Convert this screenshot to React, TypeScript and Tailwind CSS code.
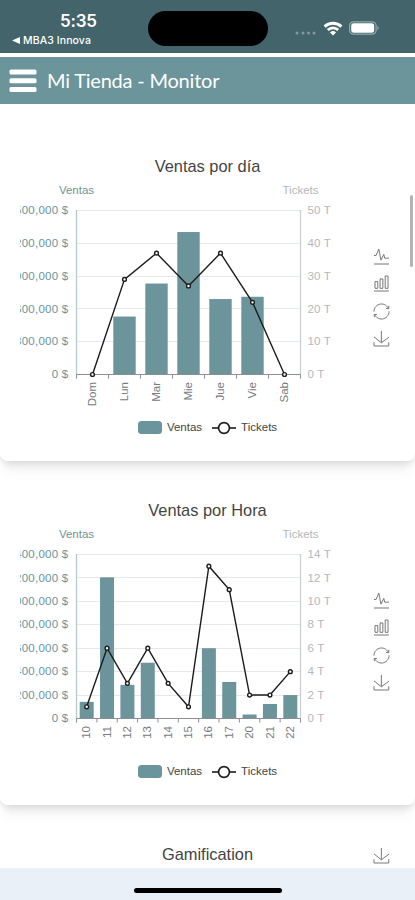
import type { ReactNode } from 'react';

const PLOT = { left: 76.5, right: 300.5, top: 74.5, bottom: 238.5 };

interface ChartData {
  title: string;
  categories: string[];
  ventas: number[];
  tickets: number[];
  maxVentas: number;
  maxTickets: number;
  steps: number;
  barWidth: number;
}

const VENTAS_DIA: ChartData = {
  title: 'Ventas por día',
  categories: ['Dom', 'Lun', 'Mar', 'Mie', 'Jue', 'Vie', 'Sab'],
  ventas: [0, 530000, 832000, 1303000, 690000, 711000, 0],
  tickets: [0, 29, 37, 27, 37, 22, 0],
  maxVentas: 1500000,
  maxTickets: 50,
  steps: 5,
  barWidth: 22.4,
};

const VENTAS_HORA: ChartData = {
  title: 'Ventas por Hora',
  categories: ['10', '11', '12', '13', '14', '15', '16', '17', '20', '21', '22'],
  ventas: [142000, 1205000, 287000, 476000, 0, 0, 600000, 312000, 34000, 124000, 200000],
  tickets: [1, 6, 3, 6, 3, 1, 13, 11, 2, 2, 4],
  maxVentas: 1400000,
  maxTickets: 14,
  steps: 7,
  barWidth: 14,
};

const TOOLS = {
  line: { box: '4.1 6.9 51.4 51.1', d: 'M4.1,28.9h7.1l9.3-22l7.4,38l9.7-19.7l3,12.8h14.9M4.1,58h51.4' },
  bar: { box: '3.1 2 53.7 56', d: 'M6.7,22.9h10V48h-10V22.9zM24.9,13h10v35h-10V13zM43.2,2h10v46h-10V2zM3.1,58h53.7' },
  restore: {
    box: '2.1 2 55.8 56',
    d: 'M47,18.9h9.8V8.7M56.3,20.1C52.1,9,40.5,0.6,26.8,2.1C12.6,3.7,1.6,16.2,2.1,30.6M13,41.1H3.1v10.2M3.7,39.9c4.2,11.1,15.8,19.5,29.5,18c14.2-1.6,25.2-14.1,24.7-28.5',
  },
  save: { box: '4.6 0 50.1 58', d: 'M4.7,22.9L29.3,45.5L54.7,23.4M4.6,43.6L4.6,58L53.8,58L53.8,43.6M29.2,45.1L29.2,0' },
};

function ToolIcon({ name }: { name: keyof typeof TOOLS }) {
  const tool = TOOLS[name];
  return (
    <svg className="h-[15px] w-[15px] overflow-visible" viewBox={tool.box} preserveAspectRatio="none">
      <path d={tool.d} fill="none" stroke="#777" strokeWidth="1" vectorEffect="non-scaling-stroke" />
    </svg>
  );
}

function Card({ title, className, children }: { title: string; className: string; children: ReactNode }) {
  return (
    <section className={`relative shrink-0 bg-white ${className}`}>
      <h2 className="flex h-[45px] items-center justify-center pt-[14px] text-[16.4px] leading-[30px] text-[#444]">
        {title}
      </h2>
      {children}
    </section>
  );
}

function ComboChart({ data }: { data: ChartData }) {
  const height = PLOT.bottom - PLOT.top;
  const band = (PLOT.right - PLOT.left) / data.categories.length;
  const cx = (i: number) => PLOT.left + band * (i + 0.5);
  const yTicket = (v: number) => PLOT.bottom - (v / data.maxTickets) * height;
  const ticks = Array.from({ length: data.steps + 1 }, (_, i) => i);

  // the left axis labels run past the canvas edge, so the svg clips them
  return (
    <svg width="325" height="230" viewBox="20 45 325 230" className="block overflow-hidden" fontSize="11.5">
      <text x="76.5" y="57.7" textAnchor="middle" fill="#6b949b">
        Ventas
      </text>
      <text x="300.5" y="57.7" textAnchor="middle" fill="#b4b8bb">
        Tickets
      </text>

      {ticks.map((i) => {
        const y = PLOT.bottom - (i / data.steps) * height;
        return (
          <g key={i}>
            {i > 0 && (
              <line x1={PLOT.left} x2={PLOT.right} y1={Math.floor(y) + 0.5} y2={Math.floor(y) + 0.5} stroke="#e3e8f1" />
            )}
            <text x="68.5" y={y + 3.7} textAnchor="end" fill="#6b949b" letterSpacing="0.25">
              {((data.maxVentas / data.steps) * i).toLocaleString('en-US')} $
            </text>
            <text x="307.5" y={y + 3.7} fill="#b4b8bb" letterSpacing="0.15">
              {(data.maxTickets / data.steps) * i} T
            </text>
          </g>
        );
      })}

      <line x1={PLOT.left} x2={PLOT.left} y1="74" y2="239" stroke="#b5cacd" strokeWidth="1.3" />
      <line x1={PLOT.right} x2={PLOT.right} y1="74" y2="239" stroke="#cbcfd2" strokeWidth="1.3" />

      {data.ventas.map((v, i) => {
        const h = (v / data.maxVentas) * height;
        return <rect key={i} x={cx(i) - data.barWidth / 2} y={PLOT.bottom - h} width={data.barWidth} height={h} fill="#6b949b" />;
      })}

      <line x1={PLOT.left} x2={PLOT.right} y1={PLOT.bottom} y2={PLOT.bottom} stroke="#8b9096" />
      {[...data.categories, ''].map((_, i) => (
        <line key={i} x1={PLOT.left + band * i} x2={PLOT.left + band * i} y1={PLOT.bottom} y2={PLOT.bottom + 4} stroke="#8b9096" />
      ))}
      {data.categories.map((label, i) => (
        <text key={label} transform={`translate(${cx(i) + 3.6} 246) rotate(-90)`} textAnchor="end" fill="#777b80">
          {label}
        </text>
      ))}

      <polyline
        points={data.tickets.map((v, i) => `${cx(i)},${yTicket(v)}`).join(' ')}
        fill="none"
        stroke="#1c1c1c"
        strokeWidth="1.4"
      />
      {data.tickets.map((v, i) => (
        <circle key={i} cx={cx(i)} cy={yTicket(v)} r="1.9" fill="#fff" stroke="#1c1c1c" strokeWidth="1.4" />
      ))}
    </svg>
  );
}

function ChartCard({ data }: { data: ChartData }) {
  return (
    <Card
      title={data.title}
      className="h-[325px] rounded-b-[8px] shadow-[0_4px_6px_-1px_rgba(0,0,0,0.1),0_14px_12px_-4px_rgba(0,0,0,0.05)]"
    >
      <div className="flex pl-5">
        <ComboChart data={data} />
        <div className="flex flex-col gap-[12.5px] pl-[29px] pt-[67.5px]">
          <ToolIcon name="line" />
          <ToolIcon name="bar" />
          <ToolIcon name="restore" />
          <ToolIcon name="save" />
        </div>
      </div>
      <div className="flex h-[33px] items-center justify-center gap-[10px] text-[11.5px] text-[#444]">
        <span className="flex items-center gap-[5px]">
          <span className="h-[13.5px] w-6 rounded-[3.5px] bg-[#6b949b]" />
          Ventas
        </span>
        <span className="flex items-center gap-[5px]">
          <svg width="24" height="14" viewBox="0 0 24 14">
            <path d="M0 7h24" stroke="#1c1c1c" strokeWidth="1.6" />
            <circle cx="12" cy="7" r="5.4" fill="#fff" stroke="#1c1c1c" strokeWidth="1.6" />
          </svg>
          Tickets
        </span>
      </div>
    </Card>
  );
}

function StatusBar() {
  return (
    <div className="flex h-[53px] shrink-0 bg-[#43646a] text-white">
      <div className="w-[148px] pt-[11px]">
        <div className="pl-[60px] font-[Inter,sans-serif] text-[17px] font-semibold leading-5 tracking-[-0.2px]">5:35</div>
        <div className="flex items-center gap-[3px] pl-3 font-[Inter,sans-serif] text-[10.5px] font-medium leading-[19px] tracking-[0.1px]">
          <svg width="8" height="7" viewBox="0 0 8 7">
            <path d="M0 3.5 8 0v7z" fill="#fff" />
          </svg>
          MBA3 Innova
        </div>
      </div>
      <div className="mt-[11px] h-[35px] w-[120px] rounded-full bg-black" />
      <div className="flex h-[35px] items-center pl-[27px] pt-[21px]">
        <svg width="22" height="4" viewBox="0 0 22 4" className="mt-[10px]" fill="#819a9e">
          <circle cx="2" cy="2" r="1.5" />
          <circle cx="8" cy="2" r="1.5" />
          <circle cx="13.5" cy="2" r="1.5" />
          <circle cx="19" cy="2" r="1.5" />
        </svg>
        <svg width="20" height="15" viewBox="0 0 20 15" className="ml-[6px]" fill="none" stroke="#fff" strokeWidth="2.9">
          <path d="M1.6 5.6a12.2 12.2 0 0 1 16.8 0" />
          <path d="M4.8 9a7.5 7.5 0 0 1 10.4 0" />
          <path d="M10 14.6 7 11.4a4.4 4.4 0 0 1 6 0z" fill="#fff" stroke="none" />
        </svg>
        <svg width="32" height="14" viewBox="0 0 32 14" className="ml-[6px]">
          <rect x="0.6" y="0.8" width="26.5" height="12.4" rx="4" fill="none" stroke="#93a8ab" strokeWidth="1.2" />
          <rect x="2.2" y="2.3" width="23" height="9.4" rx="2.6" fill="#fff" />
          <path d="M28.4 4.8v4.4c1.8-.7 1.8-3.7 0-4.4z" fill="#93a8ab" />
        </svg>
      </div>
    </div>
  );
}

export default function App() {
  return (
    <div className="relative flex h-[900px] w-[415px] flex-col overflow-hidden bg-white font-['Liberation_Sans',Arial,sans-serif]">
      <StatusBar />
      <header className="mt-1 flex h-[47px] shrink-0 items-center gap-[10px] bg-[#6b949b] pl-[9px] text-white">
        <svg width="28" height="24" viewBox="0 0 28 24" fill="#fff">
          <rect x="0.5" y="0.5" width="27" height="5" rx="1.5" />
          <rect x="0.5" y="9.3" width="27" height="5" rx="1.5" />
          <rect x="0.5" y="18" width="27" height="5" rx="1.5" />
        </svg>
        <h1 className="pb-[2px] font-[Lato,sans-serif] text-[20px] leading-6 tracking-[-0.2px]">Mi Tienda - Monitor</h1>
      </header>
      <main className="flex min-h-0 flex-1 flex-col gap-[19px] overflow-hidden pt-8">
        <ChartCard data={VENTAS_DIA} />
        <ChartCard data={VENTAS_HORA} />
        <Card title="Gamification" className="h-[120px]">
          <div className="absolute left-[374px] top-[23.5px]">
            <ToolIcon name="save" />
          </div>
        </Card>
      </main>
      <footer className="flex h-8 shrink-0 justify-center bg-[#e9f0f8] pt-5">
        <div className="h-[4.5px] w-[148px] rounded-full bg-black" />
      </footer>
      <div className="absolute left-[410px] top-[195px] h-[72px] w-[2.5px] rounded-full bg-[#b3b3b3]" />
    </div>
  );
}
